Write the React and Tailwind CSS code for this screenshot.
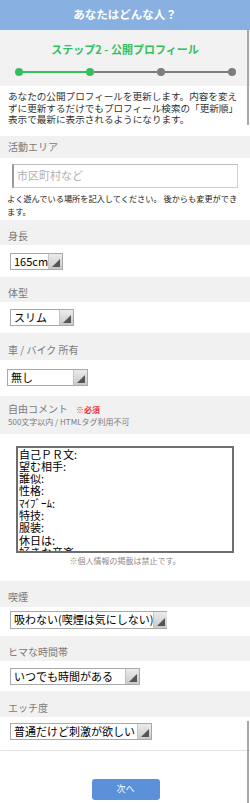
const jp = "font-['Noto_Sans_CJK_JP','Noto_Sans',sans-serif]";

function Arrow() {
  return (
    <span className="flex h-full w-[14px] shrink-0 items-end justify-end border-l border-[#c4c4c4] bg-gradient-to-b from-[#ececec] to-[#c9c9c9] pb-[2px] pr-[2px]">
      <svg width="8" height="8" viewBox="0 0 8 8">
        <polygon points="8,0 8,8 0,8" fill="#555" />
      </svg>
    </span>
  );
}

function Select({ label, className }) {
  return (
    <div
      className={`flex items-center border border-[#a9a9a9] bg-white pl-[3px] text-[11px] leading-none text-black ${className}`}
    >
      <span className="flex-1 whitespace-nowrap">{label}</span>
      <Arrow />
    </div>
  );
}

function Head({ children, className }) {
  return (
    <div
      className={`flex items-end bg-[#f1f1f1] px-[8px] text-[10px] leading-[12px] text-[#7a7a7a] ${className}`}
    >
      {children}
    </div>
  );
}

export default function App() {
  return (
    <div className={`relative min-h-[803px] w-[250px] overflow-hidden bg-white ${jp}`}>
      {/* ヘッダー */}
      <div className="flex h-[30px] items-center justify-center bg-[#88b0e1] text-[11.5px] font-bold text-white">
        あなたはどんな人？
      </div>

      {/* ステップ */}
      <div className="flex h-[56px] flex-col items-center bg-[#f2f2f2] pt-[12px]">
        <div className="text-[11px] font-bold leading-[14px] text-[#34bf5f]">
          ステップ2 - 公開プロフィール
        </div>
        <div className="mt-[12px] flex w-[221px] items-center">
          <span className="h-[8px] w-[8px] rounded-full bg-[#34bf5f]" />
          <span className="h-[2px] flex-1 bg-[#34bf5f]" />
          <span className="h-[8px] w-[8px] rounded-full bg-[#34bf5f]" />
          <span className="h-[2px] flex-1 bg-[#7d7d7d]" />
          <span className="h-[8px] w-[8px] rounded-full bg-[#7d7d7d]" />
          <span className="h-[2px] flex-1 bg-[#7d7d7d]" />
          <span className="h-[8px] w-[8px] rounded-full bg-[#7d7d7d]" />
        </div>
      </div>

      <div className="whitespace-nowrap px-[8px] pt-[5px] text-[9.6px] leading-[11.5px] text-[#333]">
        <div>あなたの公開プロフィールを更新します。内容を変え</div>
        <div>ずに更新するだけでもプロフィール検索の「更新順」</div>
        <div>表示で最新に表示されるようになります。</div>
      </div>

      {/* 活動エリア */}
      <Head className="mt-[10px] h-[22px] pb-[5px]">活動エリア</Head>
      <div className="mx-[12px] mt-[6px] flex h-[24px] items-center border border-[#cfcfcf] border-l-2 border-l-[#9a9a9a] border-t-[#bdbdbd] pl-[3px] text-[11px] text-[#b0b0b0]">
        市区町村など
      </div>
      <div className="mt-[4px] whitespace-nowrap px-[7px] text-[8.2px] leading-[13px] text-[#222]">
        <div>よく遊んでいる場所を記入してください。 後からも変更ができ</div>
        <div>ます。</div>
      </div>

      {/* 身長 */}
      <Head className="mt-[2px] h-[25px] pb-[3px]">身長</Head>
      <Select label="165cm" className="ml-[10px] mt-[8px] h-[17px] w-[53px]" />

      <Head className="mt-[7px] h-[25px] pb-[3px]">体型</Head>
      <Select label="スリム" className="ml-[10px] mt-[7px] h-[17px] w-[64px]" />

      <Head className="mt-[7px] h-[27px] pb-[4px]">車 / バイク 所有</Head>
      <Select label="無し" className="ml-[7px] mt-[9px] h-[17px] w-[81px]" />

      {/* 自由コメント */}
      <div className="mt-[10px] flex h-[38px] flex-col justify-center bg-[#f1f1f1] px-[8px] text-[#7a7a7a]">
        <div className="flex items-baseline text-[10px] leading-[13px]">
          自由コメント
          <span className="ml-[8px] text-[8px] font-bold text-[#f0303a]">※必須</span>
        </div>
        <div className="text-[8px] leading-[11px]">500文字以内 / HTMLタグ利用不可</div>
      </div>
      <textarea
        readOnly
        className="ml-[16px] mt-[12px] block h-[107px] w-[218px] resize-none overflow-hidden border-2 border-[#6e6e6e] bg-white px-[1px] py-0 text-[11px] leading-[12.3px] text-black outline-none"
        value={"自己ＰＲ文:\n望む相手:\n誰似:\n性格:\nﾏｲﾌﾞｰﾑ:\n特技:\n服装:\n休日は:\n好きな音楽:\n好きな映画:"}
      />
      <div className="mt-[3px] text-center text-[8px] leading-[10px] text-[#8a8a8a]">
        ※個人情報の掲載は禁止です。
      </div>

      <Head className="mt-[15px] h-[26px] pb-[4px]">喫煙</Head>
      <Select label="吸わない(喫煙は気にしない)" className="ml-[10px] mt-[4px] h-[18px] w-[157px]" />

      <Head className="mt-[7px] h-[25px] pb-[3px]">ヒマな時間帯</Head>
      <Select label="いつでも時間がある" className="ml-[10px] mt-[7px] h-[17px] w-[130px]" />

      <Head className="mt-[6px] h-[26px] pb-[3px]">エッチ度</Head>
      <Select label="普通だけど刺激が欲しい" className="ml-[10px] mt-[6px] h-[17px] w-[142px]" />

      <div className="mt-[10px] h-px bg-[#e2e2e2]" />

      <div className="mt-[28px] flex justify-center pl-[1px]">
        <button className="h-[21px] w-[68px] rounded-[3px] bg-[#5b91d9] text-[9px] text-white">
          次へ
        </button>
      </div>

      {/* スクロールバー */}
      <div className="absolute right-[1px] top-[30px] h-[95px] w-[2px] bg-[#a8a8a8]" />
      <div className="absolute right-[1px] top-[721px] bottom-0 w-[2px] bg-[#a8a8a8]" />
    </div>
  );
}
